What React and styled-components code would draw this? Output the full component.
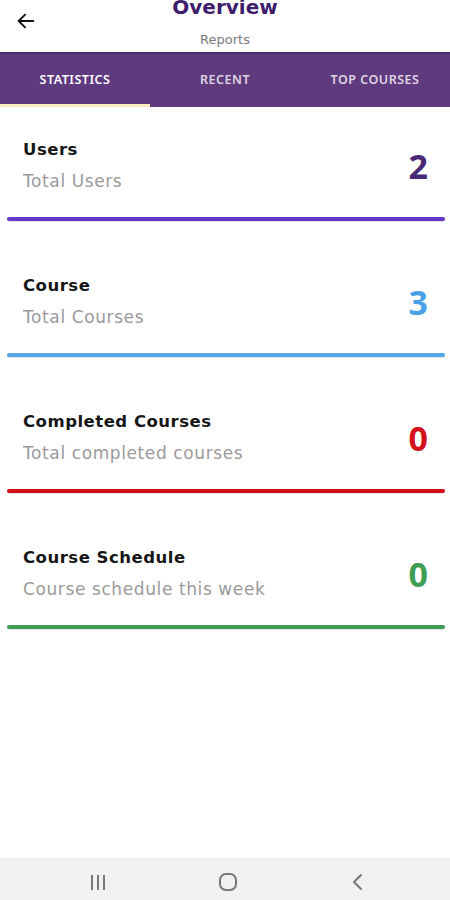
import React from 'react';
import styled, { createGlobalStyle } from 'styled-components';

const GlobalStyle = createGlobalStyle`
  html, body { margin: 0; padding: 0; background: #fff; }
  body { font-family: "Noto Sans", "Open Sans", sans-serif; }
  #root { min-height: 900px; }
`;

const Screen = styled.div`
  width: 450px;
  height: 900px;
  display: flex;
  flex-direction: column;
  background: #fff;
  overflow: hidden;
`;

const Header = styled.header`
  position: relative;
  height: 52px;
  display: flex;
  flex-direction: column;
  align-items: center;
  flex-shrink: 0;
`;

const BackBtn = styled.button`
  position: absolute;
  left: 14px;
  top: 9px;
  width: 24px;
  height: 24px;
  padding: 0;
  border: none;
  background: none;
  display: flex;
  align-items: center;
  justify-content: center;
`;

const Title = styled.h1`
  margin: -8px 0 0;
  font-family: "DejaVu Sans", sans-serif;
  font-size: 20px;
  line-height: 30px;
  font-weight: 700;
  color: #3e1d6c;
`;

const Sub = styled.div`
  margin-top: 9px;
  font-family: "DejaVu Sans", sans-serif;
  font-size: 13px;
  line-height: 18px;
  color: #7a7a7a;
`;

const TabBar = styled.nav`
  height: 55px;
  background: #5f3a7f;
  border-top: 2px solid #4b2a68;
  box-sizing: border-box;
  display: grid;
  grid-template-columns: repeat(3, 1fr);
  flex-shrink: 0;
`;

const Tab = styled.div`
  position: relative;
  display: flex;
  align-items: center;
  justify-content: center;
  padding-bottom: 2px;
  font-size: 12.5px;
  font-weight: 600;
  letter-spacing: 0.5px;
  color: ${p => p.$active ? '#ffffff' : 'rgba(255,255,255,0.8)'};
  &::after {
    content: '';
    display: ${p => p.$active ? 'block' : 'none'};
    position: absolute;
    left: 0;
    right: 0;
    bottom: 0;
    height: 3px;
    background: #f9edc0;
  }
`;

const List = styled.div`
  display: flex;
  flex-direction: column;
  gap: 22px;
`;

const Card = styled.div`
  padding-top: 31px;
`;

const Row = styled.div`
  display: flex;
  align-items: center;
  justify-content: space-between;
  padding: 0 22px 0 23px;
`;

const Texts = styled.div`
  display: flex;
  flex-direction: column;
  gap: 7px;
`;

const CardTitle = styled.div`
  font-family: "DejaVu Sans", sans-serif;
  font-size: 16.5px;
  line-height: 24px;
  font-weight: 700;
  letter-spacing: 0.5px;
  color: #161616;
`;

const CardSub = styled.div`
  font-family: "DejaVu Sans", sans-serif;
  font-size: 17px;
  line-height: 24px;
  letter-spacing: 0.6px;
  color: #9a9a9a;
`;

const Value = styled.div`
  font-size: 34px;
  line-height: 40px;
  font-weight: 700;
  color: ${p => p.$color};
`;

const Bar = styled.div`
  margin: 24px 5px 0 7px;
  height: 4px;
  border-radius: 3px;
  background: ${p => p.$color};
  box-shadow: 0 1px 1px rgba(0,0,0,0.12);
`;

const Spacer = styled.div`
  flex: 1;
`;

const NavBar = styled.div`
  height: 42px;
  background: #f1f1f1;
  border-top: 1px solid #e8e8e8;
  display: flex;
  align-items: center;
  justify-content: center;
  gap: 110px;
  flex-shrink: 0;
  padding: 4px 0 0 5px;
  box-sizing: border-box;
`;

const NavIcon = styled.span`
  width: 20px;
  height: 20px;
  display: flex;
  align-items: center;
  justify-content: center;
`;

const STATS = [
  { title: 'Users', sub: 'Total Users', value: 2, valueColor: '#4a2878', barColor: '#6737c7' },
  { title: 'Course', sub: 'Total Courses', value: 3, valueColor: '#4aa2e6', barColor: '#52a8ea' },
  { title: 'Completed Courses', sub: 'Total completed courses', value: 0, valueColor: '#d3121b', barColor: '#d10f19' },
  { title: 'Course Schedule', sub: 'Course schedule this week', value: 0, valueColor: '#3f9d55', barColor: '#3e9b58' },
];

const TABS = ['STATISTICS', 'RECENT', 'TOP COURSES'];

export default function App() {
  return (
    <>
      <GlobalStyle />
      <Screen>
        <Header>
          <BackBtn aria-label="Back">
            <svg width="22" height="22" viewBox="0 0 24 24" fill="none" stroke="#111" strokeWidth="2" strokeLinecap="round" strokeLinejoin="round">
              <path d="M20 12H4" />
              <path d="M11 5l-7 7 7 7" />
            </svg>
          </BackBtn>
          <Title>Overview</Title>
          <Sub>Reports</Sub>
        </Header>
        <TabBar>
          {TABS.map((t, i) => (
            <Tab key={t} $active={i === 0}>{t}</Tab>
          ))}
        </TabBar>
        <List>
          {STATS.map(s => (
            <Card key={s.title}>
              <Row>
                <Texts>
                  <CardTitle>{s.title}</CardTitle>
                  <CardSub>{s.sub}</CardSub>
                </Texts>
                <Value $color={s.valueColor}>{s.value}</Value>
              </Row>
              <Bar $color={s.barColor} />
            </Card>
          ))}
        </List>
        <Spacer />
        <NavBar>
          <NavIcon>
            <svg width="18" height="18" viewBox="0 0 18 18" fill="#777">
              <rect x="2" y="2" width="2" height="15" />
              <rect x="8" y="2" width="2" height="15" />
              <rect x="14" y="2" width="2" height="15" />
            </svg>
          </NavIcon>
          <NavIcon>
            <svg width="20" height="20" viewBox="0 0 20 20" fill="none" stroke="#777" strokeWidth="2">
              <rect x="2" y="2" width="16" height="16" rx="6" />
            </svg>
          </NavIcon>
          <NavIcon>
            <svg width="18" height="20" viewBox="0 0 18 20" fill="none" stroke="#777" strokeWidth="2" strokeLinecap="round" strokeLinejoin="round">
              <path d="M12 3L5 10l7 7" />
            </svg>
          </NavIcon>
        </NavBar>
      </Screen>
    </>
  );
}
